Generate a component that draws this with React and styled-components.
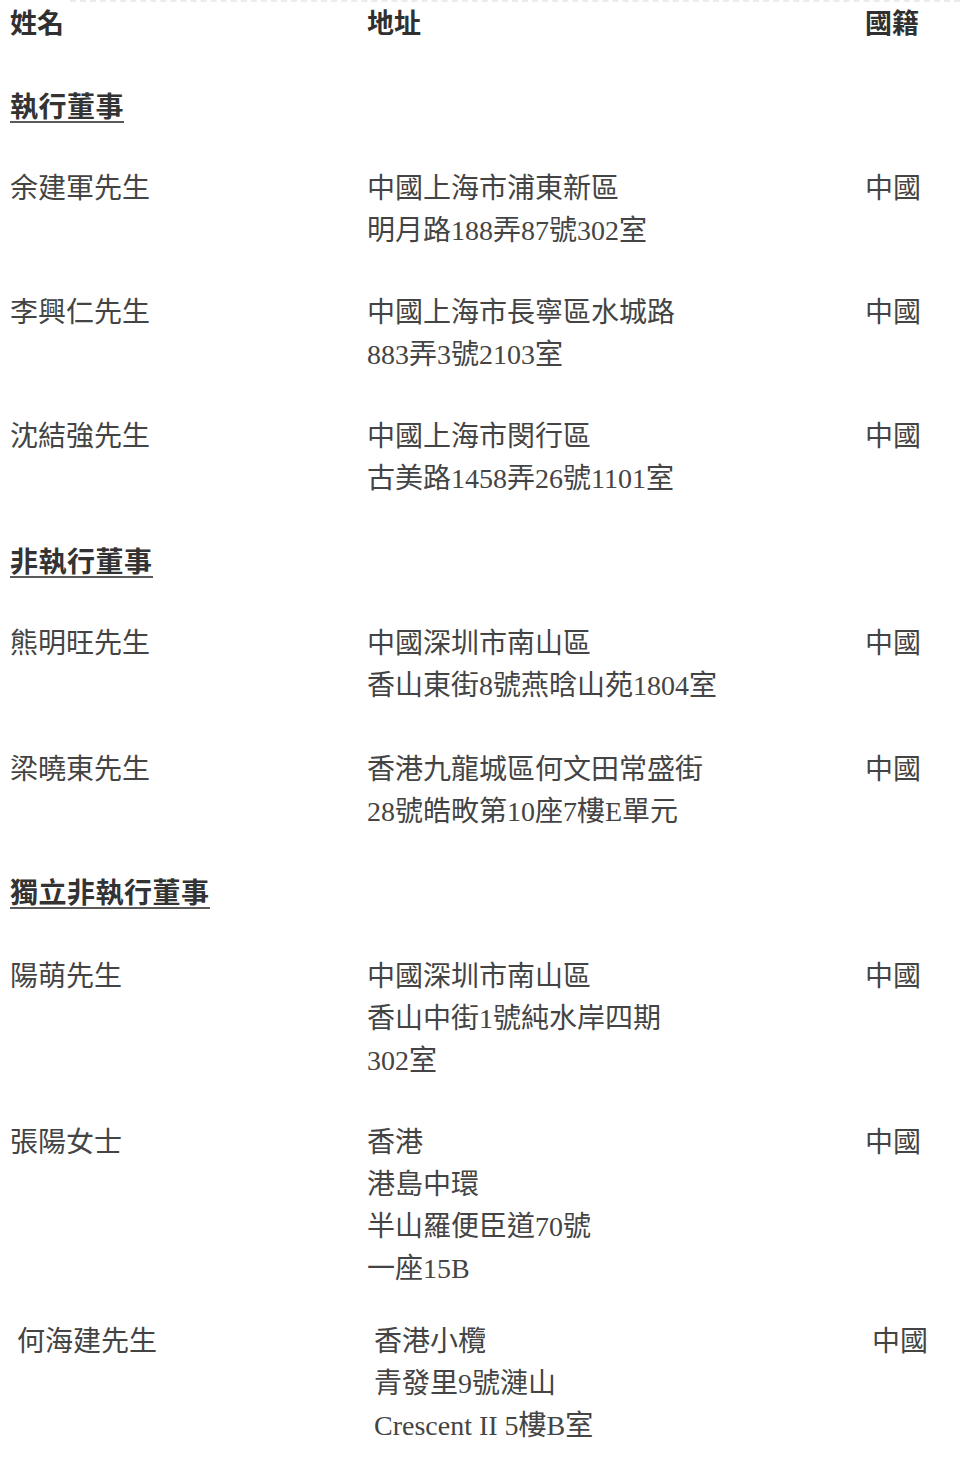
import styled, { createGlobalStyle } from 'styled-components';

const GlobalStyle = createGlobalStyle`
  html, body {
    margin: 0;
    padding: 0;
    background: #ffffff;
  }
  body {
    font-family: "Liberation Serif", "Noto Sans CJK TC", serif;
    color: #3a3a3a;
  }
`;

const directors = [
  {
    title: '執行董事',
    gap: 44,
    people: [
      { name: '余建軍先生', address: ['中國上海市浦東新區', '明月路188弄87號302室'], nation: '中國' },
      { name: '李興仁先生', address: ['中國上海市長寧區水城路', '883弄3號2103室'], nation: '中國' },
      { name: '沈結強先生', address: ['中國上海市閔行區', '古美路1458弄26號1101室'], nation: '中國' },
    ],
  },
  {
    title: '非執行董事',
    gap: 41,
    people: [
      { name: '熊明旺先生', address: ['中國深圳市南山區', '香山東街8號燕晗山苑1804室'], nation: '中國' },
      { name: '梁曉東先生', address: ['香港九龍城區何文田常盛街', '28號皓畋第10座7樓E單元'], nation: '中國', gap: 42 },
    ],
  },
  {
    title: '獨立非執行董事',
    gap: 39,
    people: [
      { name: '陽萌先生', address: ['中國深圳市南山區', '香山中街1號純水岸四期', '302室'], nation: '中國', gap: 42 },
      { name: '張陽女士', address: ['香港', '港島中環', '半山羅便臣道70號', '一座15B'], nation: '中國' },
      {
        name: '何海建先生',
        address: ['香港小欖', '青發里9號漣山', 'Crescent II 5樓B室'],
        nation: '中國',
        gap: 31,
        shifted: true,
      },
    ],
  },
];

const Page = styled.main`
  width: 960px;
  min-height: 1467px;
  box-sizing: border-box;
  padding: 0 0 0 10px;
  display: flex;
  flex-direction: column;
`;

const TopRule = styled.div`
  height: 0;
  margin-left: 60px;
  border-top: 2px dashed #ececec;
`;

const Grid = styled.div`
  display: grid;
  grid-template-columns: 357px 498px 1fr;
  padding-left: ${(p) => (p.$shifted ? '7px' : '0')};
  margin-top: ${(p) => p.$gap}px;
`;

const HeaderCell = styled.div`
  font-family: "Noto Sans CJK TC", "Noto Sans", sans-serif;
  font-weight: 700;
  font-size: 27px;
  line-height: 40px;
  color: #303030;
`;

const Section = styled.section`
  display: flex;
  flex-direction: column;
`;

const TitleLine = styled.div`
  height: 42px;
  margin-top: ${(p) => p.$gap}px;
  display: flex;
  align-items: center;
`;

const Title = styled.h2`
  margin: 0;
  font-family: "Noto Sans CJK TC", "Noto Sans", sans-serif;
  font-weight: 700;
  font-size: 28px;
  line-height: 28px;
  letter-spacing: 0.5px;
  color: #333333;
  padding-bottom: 2px;
  border-bottom: 2px solid #5a5a5a;
`;

const Cell = styled.div`
  font-size: 28px;
  line-height: 42px;
  color: #444444;
  white-space: nowrap;
`;

const AddressLine = styled.div`
  height: 42px;
`;

function Person({ person }) {
  return (
    <Grid $gap={person.gap ?? 40} $shifted={person.shifted}>
      <Cell>{person.name}</Cell>
      <Cell>
        {person.address.map((line) => (
          <AddressLine key={line}>{line}</AddressLine>
        ))}
      </Cell>
      <Cell>{person.nation}</Cell>
    </Grid>
  );
}

export default function App() {
  return (
    <>
      <GlobalStyle />
      <Page>
        <TopRule />
        <Grid $gap={0}>
          <HeaderCell>姓名</HeaderCell>
          <HeaderCell>地址</HeaderCell>
          <HeaderCell>國籍</HeaderCell>
        </Grid>
        {directors.map((group) => (
          <Section key={group.title}>
            <TitleLine $gap={group.gap}>
              <Title>{group.title}</Title>
            </TitleLine>
            {group.people.map((p) => (
              <Person key={p.name} person={p} />
            ))}
          </Section>
        ))}
      </Page>
    </>
  );
}
